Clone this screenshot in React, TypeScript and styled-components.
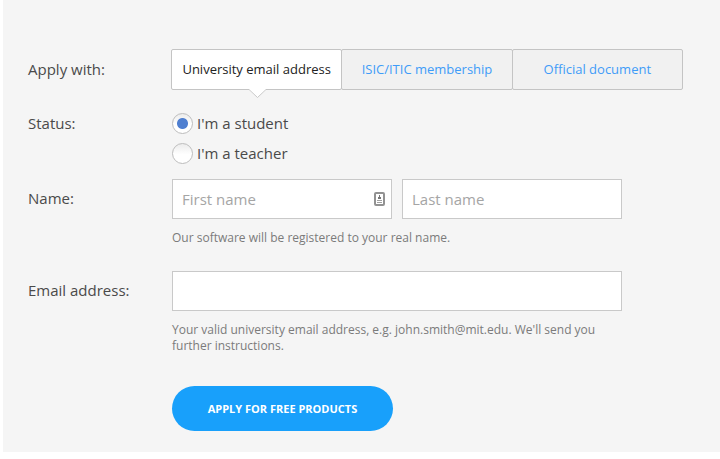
import React, { useState } from "react";
import styled, { createGlobalStyle } from "styled-components";

const GlobalStyle = createGlobalStyle`
  *, *::before, *::after { box-sizing: border-box; }
  body {
    margin: 0;
    background: #fff;
    color: #4a4a4a;
    font-family: "Open Sans", "Noto Sans", sans-serif;
    font-size: 15px;
  }
  button, input { font-family: inherit; }
`;

const Panel = styled.form`
  margin-left: 3px;
  padding: 49px 37px 21px 25px;
  background: #f5f5f5;
`;

const Row = styled.div<{ $gap: number }>`
  display: grid;
  grid-template-columns: 144px minmax(0, 1fr);
  margin-bottom: ${(p) => p.$gap}px;
`;

const Caption = styled.span<{ $height: number }>`
  line-height: ${(p) => p.$height}px;
`;

const FieldLabel = styled.label`
  line-height: 38px;
`;

const Tabs = styled.div`
  display: grid;
  grid-template-columns: repeat(3, 1fr);
`;

const Tab = styled.button<{ $active: boolean }>`
  position: relative;
  height: 41px;
  margin: 0 0 0 -1px;
  padding: 0;
  border: 1px solid #c4c4c4;
  border-radius: 2px;
  background: ${(p) => (p.$active ? "#fff" : "#f1f1f1")};
  color: ${(p) => (p.$active ? "#222" : "#3f9cf8")};
  font-size: 13px;
  line-height: 39px;
  white-space: nowrap;
  cursor: pointer;
`;

const Pointer = styled.svg`
  position: absolute;
  top: 100%;
  left: 50%;
  margin-left: -8px;
  display: block;
`;

const RadioLabel = styled.label`
  display: flex;
  align-items: center;
  gap: 4px;
  height: 30px;
  cursor: pointer;
`;

const Radio = styled.input`
  appearance: none;
  width: 21px;
  height: 21px;
  margin: 0;
  border: 1px solid #bdbdbd;
  border-radius: 50%;
  background: linear-gradient(#ececec, #fff 55%);

  &:checked {
    background: radial-gradient(circle, #4f7fd0 5px, transparent 6px),
      linear-gradient(#ececec, #fff 55%);
  }
`;

const Fields = styled.div`
  max-width: 450px;
`;

const Pair = styled.div`
  display: grid;
  grid-template-columns: repeat(2, minmax(0, 1fr));
  gap: 10px;
`;

const InputBox = styled.div`
  display: flex;
  align-items: center;
  height: 40px;
  padding: 0 6px 0 9px;
  border: 1px solid #c9c9c9;
  background: #fff;
`;

const TextInput = styled.input`
  flex: 1;
  min-width: 0;
  height: 38px;
  padding: 0;
  border: 0;
  outline: 0;
  background: transparent;
  color: #4a4a4a;
  font-size: 15px;

  &::placeholder {
    color: #a5a5a5;
    opacity: 1;
  }
`;

const Hint = styled.p`
  margin: 11px 0 0;
  color: #7b7b7b;
  font-size: 12px;
  line-height: 16px;
`;

const Submit = styled.button`
  width: 221px;
  height: 45px;
  margin-left: 144px;
  padding: 0;
  border: 0;
  border-radius: 23px;
  background: #18a0fb;
  color: #fff;
  font-size: 11px;
  font-weight: 700;
  cursor: pointer;
`;

const CardIcon = () => (
  <svg width="11" height="14" viewBox="0 0 11 14" aria-hidden="true">
    <rect x="1" y="1" width="9" height="12" rx="1" fill="#fff" stroke="#929292" strokeWidth="2" />
    <path d="M5 3h1v2h1v2H4V5h1z" fill="#777" />
    <path d="M3 8.5h5M3 10.5h5" stroke="#a0a0a0" />
  </svg>
);

const methods = ["University email address", "ISIC/ITIC membership", "Official document"];
const statuses = ["student", "teacher"];

export default function App() {
  const [method, setMethod] = useState(methods[0]);
  const [status, setStatus] = useState(statuses[0]);

  return (
    <>
      <GlobalStyle />
      <Panel onSubmit={(e) => e.preventDefault()}>
        <Row $gap={18}>
          <Caption id="method" $height={40}>Apply with:</Caption>
          <Tabs role="tablist" aria-labelledby="method">
            {methods.map((name) => (
              <Tab
                key={name}
                type="button"
                role="tab"
                aria-selected={name === method}
                $active={name === method}
                onClick={() => setMethod(name)}
              >
                {name}
                {name === method && (
                  <Pointer width="17" height="9" viewBox="0 0 17 9" aria-hidden="true">
                    <path d="M0 0h17v1L8.5 8.5 0 1z" fill="#fff" />
                    <path d="M0 .5L8.5 8.5 17 .5" fill="none" stroke="#c9c9c9" />
                  </Pointer>
                )}
              </Tab>
            ))}
          </Tabs>
        </Row>
        <Row $gap={11} role="radiogroup" aria-labelledby="status">
          <Caption id="status" $height={30}>Status:</Caption>
          <div>
            {statuses.map((value) => (
              <RadioLabel key={value}>
                <Radio
                  type="radio"
                  name="status"
                  value={value}
                  checked={status === value}
                  onChange={() => setStatus(value)}
                />
                {`I'm a ${value}`}
              </RadioLabel>
            ))}
          </div>
        </Row>
        <Row $gap={25}>
          <FieldLabel htmlFor="first-name">Name:</FieldLabel>
          <Fields>
            <Pair>
              <InputBox>
                <TextInput id="first-name" placeholder="First name" />
                <CardIcon />
              </InputBox>
              <InputBox>
                <TextInput aria-label="Last name" placeholder="Last name" />
              </InputBox>
            </Pair>
            <Hint>Our software will be registered to your real name.</Hint>
          </Fields>
        </Row>
        <Row $gap={32}>
          <FieldLabel htmlFor="email">Email address:</FieldLabel>
          <Fields>
            <InputBox>
              <TextInput id="email" type="email" />
            </InputBox>
            <Hint>
              Your valid university email address, e.g. john.smith@mit.edu. We'll send you further
              instructions.
            </Hint>
          </Fields>
        </Row>
        <Submit type="submit">APPLY FOR FREE PRODUCTS</Submit>
      </Panel>
    </>
  );
}
